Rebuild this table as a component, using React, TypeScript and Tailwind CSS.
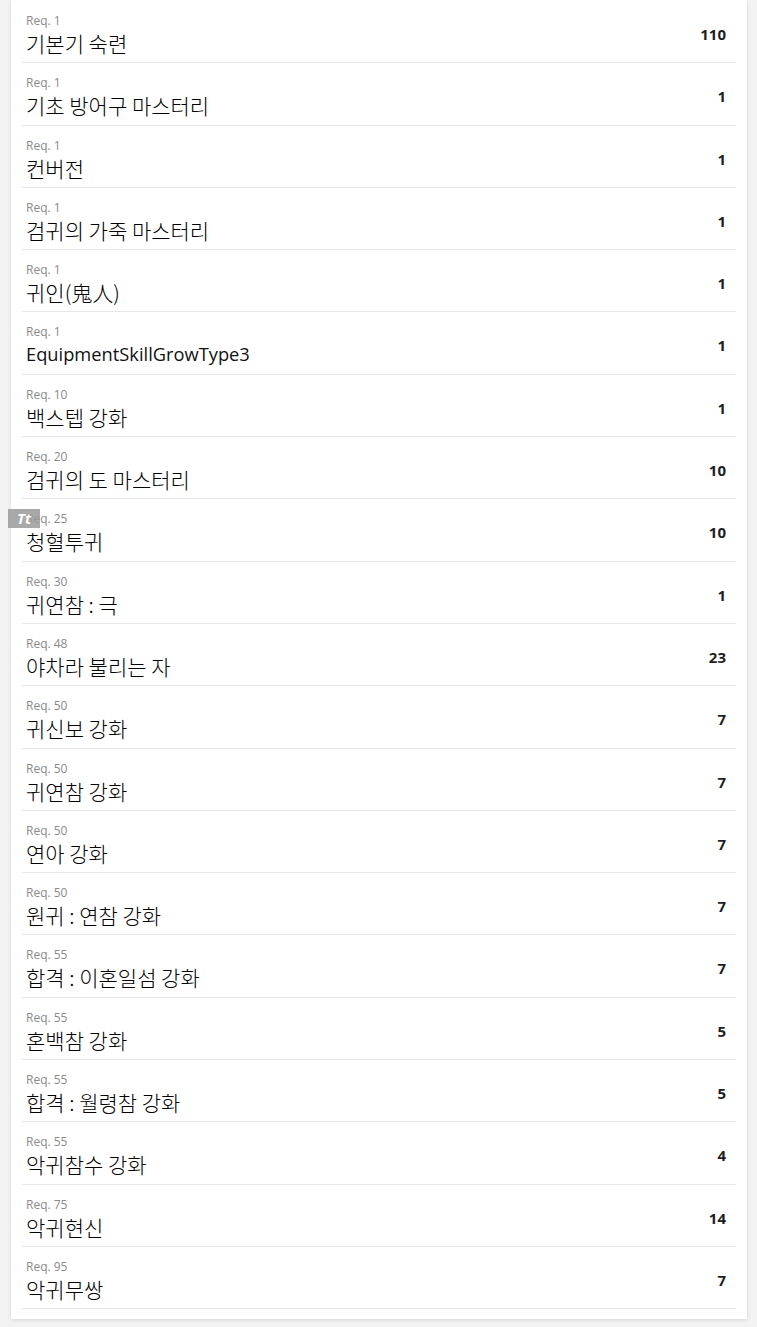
import React from "react";

const rows: [string, string, string][] = [
  ["Req. 1", "기본기 숙련", "110"],
  ["Req. 1", "기초 방어구 마스터리", "1"],
  ["Req. 1", "컨버전", "1"],
  ["Req. 1", "검귀의 가죽 마스터리", "1"],
  ["Req. 1", "귀인(鬼人)", "1"],
  ["Req. 1", "EquipmentSkillGrowType3", "1"],
  ["Req. 10", "백스텝 강화", "1"],
  ["Req. 20", "검귀의 도 마스터리", "10"],
  ["Req. 25", "청혈투귀", "10"],
  ["Req. 30", "귀연참 : 극", "1"],
  ["Req. 48", "야차라 불리는 자", "23"],
  ["Req. 50", "귀신보 강화", "7"],
  ["Req. 50", "귀연참 강화", "7"],
  ["Req. 50", "연아 강화", "7"],
  ["Req. 50", "원귀 : 연참 강화", "7"],
  ["Req. 55", "합격 : 이혼일섬 강화", "7"],
  ["Req. 55", "혼백참 강화", "5"],
  ["Req. 55", "합격 : 월령참 강화", "5"],
  ["Req. 55", "악귀참수 강화", "4"],
  ["Req. 75", "악귀현신", "14"],
  ["Req. 95", "악귀무쌍", "7"],
];

const isLatin = (s: string) => /^[\x00-\x7f]+$/.test(s);

export default function App() {
  return (
    <div
      className="min-h-[1327px] w-[757px] bg-[#f3f3f4] pb-[7px]"
      style={{ fontFamily: '"Open Sans", "Noto Sans CJK KR", sans-serif' }}
    >
      <div className="ml-[11px] w-[736px] bg-white px-[11px] pt-[1px] pb-[10px] shadow-[0_1px_4px_rgba(0,0,0,0.12)]">
        {rows.map(([req, name, val], i) => (
          <div
            key={i}
            className="relative flex h-[62.3px] items-start border-b border-[#e6e6e6] pl-[4px] pr-[10px] pt-[12px]"
          >
            <div className="flex-1">
              <div className="text-[12px] leading-[16px] text-[#8a8a8a]">{req}</div>
              {isLatin(name) ? (
                <div className="text-[18.3px] leading-[28px] text-[#111]">{name}</div>
              ) : (
                <div
                  className="text-[21px] font-light leading-[28px] text-[#000]"
                  style={{ fontFamily: '"Noto Sans CJK KR", "Open Sans", sans-serif' }}
                >
                  {name}
                </div>
              )}
            </div>
            <div className="mt-[11px] text-[15px] font-bold leading-[20px] text-[#1e1e1e]">{val}</div>
            {req === "Req. 25" && (
              <div className="absolute left-[-14px] top-[10px] flex h-[19px] w-[32px] items-center justify-center bg-[#9a9a9a]/85 text-[15px] font-bold italic leading-none text-white">
                Tt
              </div>
            )}
          </div>
        ))}
      </div>
    </div>
  );
}
